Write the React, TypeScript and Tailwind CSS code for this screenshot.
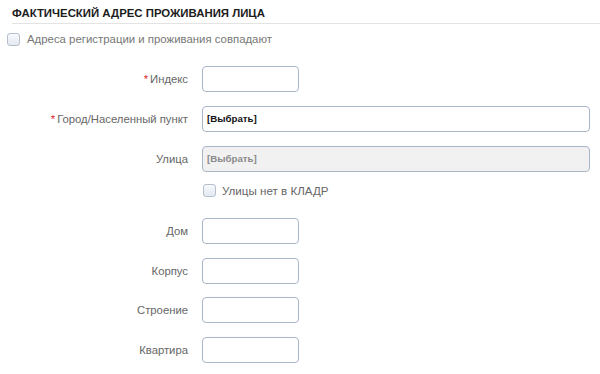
import React from "react";

function Box() {
    return (
        <span className="inline-block h-[13px] w-[13px] shrink-0 rounded-[3px] border border-[#b5bfcd] bg-gradient-to-b from-[#f7f9fc] to-[#e4e9f1]" />
    );
}

function Row({ label, required = false, children }: { label: string; required?: boolean; children: React.ReactNode }) {
    return (
        <div className="flex h-[26px] items-center">
            <div className="w-[188px] shrink-0 text-right text-[11.3px] text-[#666]">
                {required && <span className="mr-[2px] text-[#d9262d]">*</span>}
                {label}
            </div>
            <div className="ml-[14px] flex flex-1 items-center">{children}</div>
        </div>
    );
}

function ShortInput() {
    return <div className="h-[26px] w-[97px] rounded-[4px] border border-[#a9b6c8] bg-white" />;
}

function SelectInput({ disabled = false }: { disabled?: boolean }) {
    return (
        <div
            className={`flex h-[26px] w-[388px] items-center rounded-[4px] border border-[#a9b6c8] pl-[4px] text-[9.7px] font-bold ${
                disabled ? "bg-[#f1f1f1] text-[#8a8a8a]" : "bg-white text-[#111]"
            }`}
        >
            [Выбрать]
        </div>
    );
}

export default function App() {
    return (
        <div className="h-[374px] w-[600px] overflow-hidden bg-white font-['Liberation_Sans',Arial,sans-serif]">
            <div className="pl-[12px] pt-[6px]">
                <h2 className="text-[11.4px] font-bold leading-[14px] text-[#1d1d1d]">
                    ФАКТИЧЕСКИЙ АДРЕС ПРОЖИВАНИЯ ЛИЦА
                </h2>
                <div className="mt-[3px] h-px bg-[#e3e3e3]" />
            </div>

            <label className="mt-[7px] flex items-center pl-[7px]">
                <Box />
                <span className="ml-[7px] text-[11.4px] text-[#777]">Адреса регистрации и проживания совпадают</span>
            </label>

            <div className="mt-[18px] flex flex-col">
                <Row label="Индекс" required>
                    <ShortInput />
                </Row>
                <div className="mt-[14px]">
                    <Row label="Город/Населенный пункт" required>
                        <SelectInput />
                    </Row>
                </div>
                <div className="mt-[14px]">
                    <Row label="Улица">
                        <SelectInput disabled />
                    </Row>
                </div>
                <label className="ml-[203px] mt-[12px] flex h-[13px] items-center">
                    <Box />
                    <span className="ml-[6px] text-[11.6px] text-[#666]">Улицы нет в КЛАДР</span>
                </label>
                <div className="mt-[21px]">
                    <Row label="Дом">
                        <ShortInput />
                    </Row>
                </div>
                <div className="mt-[14px]">
                    <Row label="Корпус">
                        <ShortInput />
                    </Row>
                </div>
                <div className="mt-[13px]">
                    <Row label="Строение">
                        <ShortInput />
                    </Row>
                </div>
                <div className="mt-[14px]">
                    <Row label="Квартира">
                        <ShortInput />
                    </Row>
                </div>
            </div>
        </div>
    );
}
